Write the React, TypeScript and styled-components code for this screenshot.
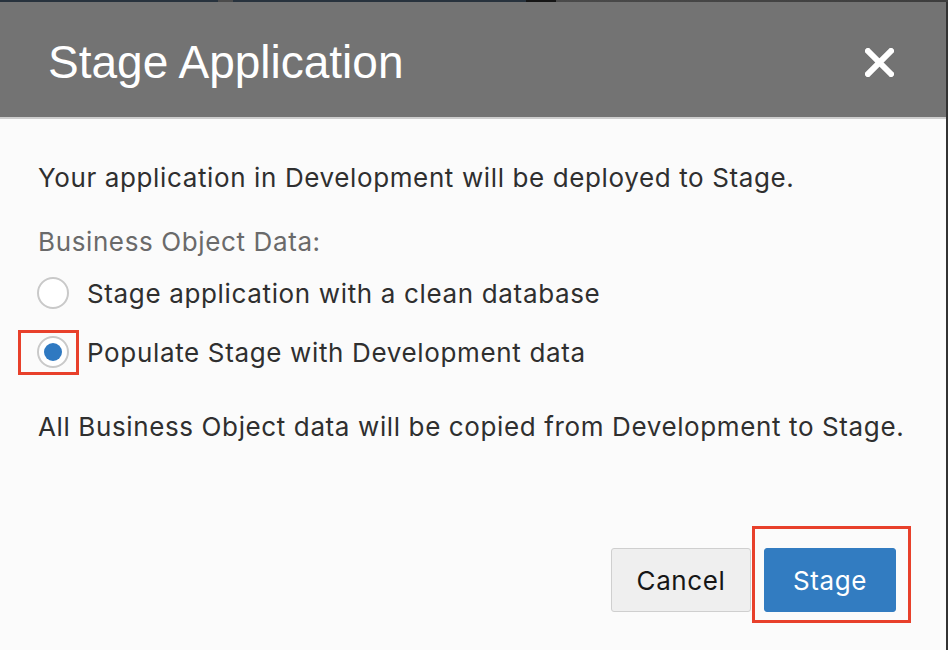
import React from "react";
import styled, { createGlobalStyle } from "styled-components";

const Global = createGlobalStyle`
  html, body { margin: 0; padding: 0; background: #fbfbfb; }
  body { font-family: Inter, "Noto Sans", "Liberation Sans", sans-serif; }
  * { box-sizing: border-box; }
`;

const Page = styled.div`
  width: 948px;
  height: 650px;
  display: flex;
  flex-direction: column;
  background: #333333;
  overflow: hidden;
`;

const BackdropStrip = styled.div`
  height: 2px;
  flex: none;
  background: linear-gradient(
    to right,
    #27323d 0px,
    #27323d 218px,
    #4b4b4b 218px,
    #4b4b4b 233px,
    #27323d 233px,
    #27323d 526px,
    #151515 526px,
    #151515 556px,
    #4a4a4a 556px,
    #3d3d3d 948px
  );
`;

const Dialog = styled.div`
  flex: 1;
  width: 946px;
  display: flex;
  flex-direction: column;
  background: #fbfbfb;
`;

const Header = styled.header`
  height: 117px;
  flex: none;
  background: #737373;
  border-bottom: 2px solid #cecece;
  display: flex;
  align-items: center;
  justify-content: space-between;
  padding: 0 52px 0 48px;
`;

const Title = styled.h1`
  margin: 0;
  font-family: "Liberation Sans", Arial, sans-serif;
  font-weight: 400;
  font-size: 46px;
  line-height: 52px;
  color: #ffffff;
  padding-top: 4px;
`;

const CloseButton = styled.button`
  width: 29px;
  height: 29px;
  padding: 0;
  border: none;
  background: transparent;
  display: flex;
  align-items: center;
  justify-content: center;
  cursor: pointer;
  margin-top: 6px;
`;

const Body = styled.div`
  flex: 1;
  display: flex;
  flex-direction: column;
  padding: 43px 0 0 38px;
`;

const Text = styled.p<{ $muted?: boolean; $gap?: number }>`
  margin: ${(p) => p.$gap ?? 0}px 0 0 0;
  font-size: 26px;
  line-height: 32px;
  letter-spacing: 0.62px;
  color: ${(p) => (p.$muted ? "#6a6a6a" : "#2f2f2f")};
`;

const RadioGroup = styled.div`
  display: flex;
  flex-direction: column;
  gap: 27px;
  margin-top: 19px;
`;

const RadioRow = styled.label`
  position: relative;
  display: flex;
  align-items: center;
  gap: 18px;
  height: 32px;
  font-size: 26px;
  letter-spacing: 0.65px;
  color: #2f2f2f;
`;

const RadioCircle = styled.span<{ $checked?: boolean }>`
  width: 32px;
  height: 32px;
  flex: none;
  border-radius: 50%;
  border: 2px solid #c9c9c9;
  background: #ffffff;
  display: flex;
  align-items: center;
  justify-content: center;
  margin-left: -1px;
  &::after {
    content: "";
    display: ${(p) => (p.$checked ? "block" : "none")};
    width: 18px;
    height: 18px;
    border-radius: 50%;
    background: #2f79c1;
  }
`;

const Highlight = styled.span<{ $top: number; $left: number; $w: number; $h: number }>`
  position: absolute;
  top: ${(p) => p.$top}px;
  left: ${(p) => p.$left}px;
  width: ${(p) => p.$w}px;
  height: ${(p) => p.$h}px;
  border: 3px solid #e8402b;
  pointer-events: none;
`;

const Footer = styled.div`
  display: flex;
  justify-content: flex-end;
  gap: 13px;
  padding: 0 50px 0 0;
  margin-top: 105px;
`;

const Button = styled.button<{ $primary?: boolean }>`
  position: relative;
  height: 64px;
  padding: 0;
  width: ${(p) => (p.$primary ? 132 : 140)}px;
  border-radius: 3px;
  font-family: Inter, "Noto Sans", "Liberation Sans", sans-serif;
  font-size: 26px;
  letter-spacing: 0.6px;
  border: 1px solid ${(p) => (p.$primary ? "#327cc1" : "#cfcfcf")};
  background: ${(p) => (p.$primary ? "#327cc1" : "#efefef")};
  color: ${(p) => (p.$primary ? "#ffffff" : "#161616")};
  cursor: pointer;
`;

function CloseIcon() {
  return (
    <svg width="29" height="29" viewBox="0 0 29 29">
      <path d="M3 3 L26 26 M26 3 L3 26" stroke="#ffffff" strokeWidth="6" strokeLinecap="square" />
    </svg>
  );
}

export default function App() {
  return (
    <>
      <Global />
      <Page>
        <BackdropStrip />
        <Dialog>
          <Header>
            <Title>Stage Application</Title>
            <CloseButton aria-label="Close">
              <CloseIcon />
            </CloseButton>
          </Header>
          <Body>
            <Text>Your application in Development will be deployed to Stage.</Text>
            <Text $muted $gap={32}>Business Object Data:</Text>
            <RadioGroup>
              <RadioRow>
                <RadioCircle />
                Stage application with a clean database
              </RadioRow>
              <RadioRow>
                <RadioCircle $checked />
                Populate Stage with Development data
                <Highlight $top={-6} $left={-20} $w={61} $h={45} />
              </RadioRow>
            </RadioGroup>
            <Text $gap={43}>All Business Object data will be copied from Development to Stage.</Text>
            <Footer>
              <Button>Cancel</Button>
              <Button $primary>
                Stage
                <Highlight $top={-23} $left={-13} $w={159} $h={97} />
              </Button>
            </Footer>
          </Body>
        </Dialog>
      </Page>
    </>
  );
}
